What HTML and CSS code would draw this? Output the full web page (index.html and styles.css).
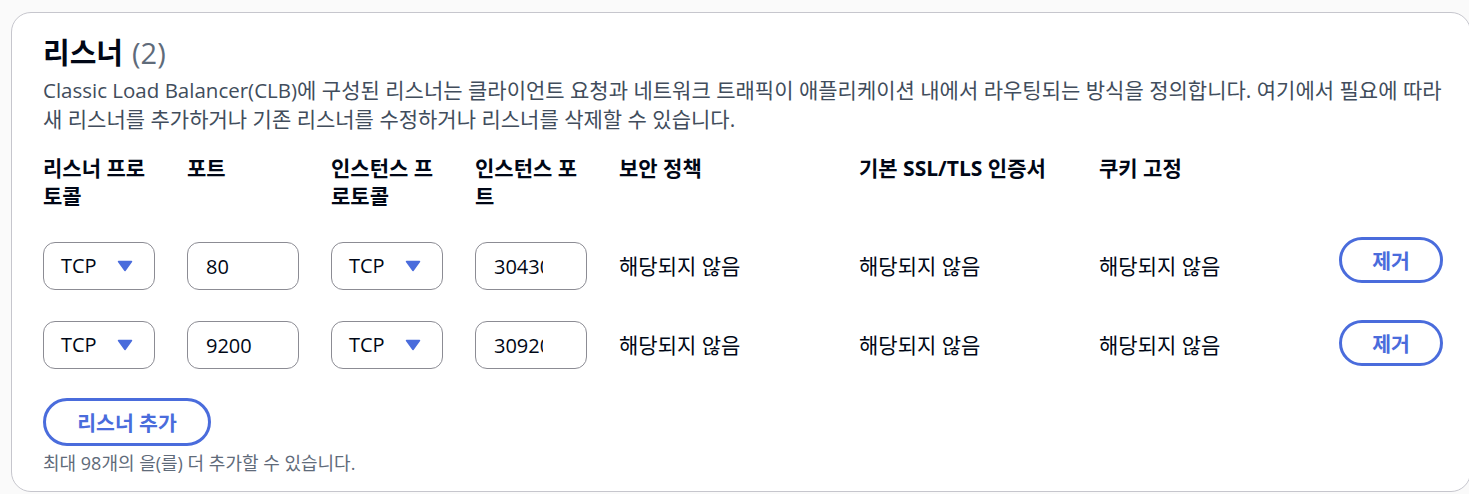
FILE: index.html
```html
<!DOCTYPE html>
<html lang="ko">
<head>
<meta charset="utf-8">
<title>리스너</title>
<link rel="stylesheet" href="styles.css">
</head>
<body>
<div class="page">
  <section class="card">
    <h2 class="title"><span class="title-main">리스너</span><span class="count">(2)</span></h2>
    <p class="desc"><span class="latin">Classic Load Balancer(CLB)</span>에 구성된 리스너는 클라이언트 요청과 네트워크 트래픽이 애플리케이션 내에서 라우팅되는 방식을 정의합니다. 여기에서 필요에 따라 새 리스너를 추가하거나 기존 리스너를 수정하거나 리스너를 삭제할 수 있습니다.</p>

    <div class="grid head">
      <div class="label">리스너 프로토콜</div>
      <div class="label">포트</div>
      <div class="label">인스턴스 프로토콜</div>
      <div class="label">인스턴스 포트</div>
      <div class="label">보안 정책</div>
      <div class="label">기본 SSL/TLS 인증서</div>
      <div class="label">쿠키 고정</div>
      <div></div>
    </div>

    <div class="grid row row-first">
      <div class="select"><span class="sel-text">TCP</span><svg class="caret" width="16" height="12" viewBox="0 0 16 12"><path d="M1.5 1.5 H14.5 L8 10.5 Z" fill="#4a6cdc" stroke="#4a6cdc" stroke-width="1.5" stroke-linejoin="round"/></svg></div>
      <input class="field" type="text" value="80" readonly>
      <div class="select"><span class="sel-text">TCP</span><svg class="caret" width="16" height="12" viewBox="0 0 16 12"><path d="M1.5 1.5 H14.5 L8 10.5 Z" fill="#4a6cdc" stroke="#4a6cdc" stroke-width="1.5" stroke-linejoin="round"/></svg></div>
      <input class="field" type="text" value="30430" readonly>
      <div class="cell">해당되지 않음</div>
      <div class="cell">해당되지 않음</div>
      <div class="cell">해당되지 않음</div>
      <button class="btn btn-remove" type="button">제거</button>
    </div>

    <div class="grid row row-second">
      <div class="select"><span class="sel-text">TCP</span><svg class="caret" width="16" height="12" viewBox="0 0 16 12"><path d="M1.5 1.5 H14.5 L8 10.5 Z" fill="#4a6cdc" stroke="#4a6cdc" stroke-width="1.5" stroke-linejoin="round"/></svg></div>
      <input class="field" type="text" value="9200" readonly>
      <div class="select"><span class="sel-text">TCP</span><svg class="caret" width="16" height="12" viewBox="0 0 16 12"><path d="M1.5 1.5 H14.5 L8 10.5 Z" fill="#4a6cdc" stroke="#4a6cdc" stroke-width="1.5" stroke-linejoin="round"/></svg></div>
      <input class="field" type="text" value="30920" readonly>
      <div class="cell">해당되지 않음</div>
      <div class="cell">해당되지 않음</div>
      <div class="cell">해당되지 않음</div>
      <button class="btn btn-remove" type="button">제거</button>
    </div>

    <button class="btn btn-add" type="button">리스너 추가</button>
    <p class="hint">최대 98개의 을(를) 더 추가할 수 있습니다.</p>
  </section>
</div>
</body>
</html>
```

FILE: styles.css
```css
html, body {
  margin: 0;
  padding: 0;
  background: #fafafa;
  overflow: hidden;
}

body {
  font-family: "Open Sans", "Noto Sans CJK KR", sans-serif;
  color: #000716;
}

.page {
  padding: 12px 0 0 11px;
}

.card {
  box-sizing: border-box;
  width: 1460px;
  background: #ffffff;
  border: 1px solid #c6c6cd;
  border-radius: 20px;
  padding: 21px 24px 16px 31px;
}

.title {
  margin: 0;
  font-weight: 700;
  line-height: 38px;
  height: 38px;
  display: flex;
  align-items: baseline;
}

.title-main {
  font-size: 29px;
  color: #000716;
}

.count {
  font-size: 29px;
  font-weight: 400;
  color: #5f6b7a;
  margin-left: 9px;
}

.desc {
  margin: 4px 0 0;
  font-size: 21px;
  line-height: 29px;
  color: #414d5c;
}

.latin {
  font-size: 20.5px;
}

.grid {
  display: grid;
  grid-template-columns: 112px 112px 112px 112px 208px 208px 208px auto;
  column-gap: 32px;
}

.head {
  margin-top: 20px;
  align-items: start;
}

.label {
  font-size: 21px;
  font-weight: 700;
  line-height: 28px;
  color: #000716;
}

.row {
  align-items: center;
  height: 48px;
}

.row-first {
  margin-top: 32px;
}

.row-second {
  margin-top: 31px;
}

.select,
.field {
  box-sizing: border-box;
  width: 112px;
  height: 48px;
  border: 1px solid #8c8c94;
  border-radius: 12px;
  background: #ffffff;
  font-family: "Open Sans", "Noto Sans CJK KR", sans-serif;
  font-size: 20px;
  color: #000716;
}

.select {
  display: flex;
  align-items: center;
  justify-content: space-between;
  padding: 0 21px 0 17px;
}

.sel-text {
  line-height: 28px;
}

.caret {
  display: block;
}

.field {
  padding: 0 43px 0 18px;
  outline: none;
  margin: 0;
}

.cell {
  font-size: 21px;
  line-height: 28px;
  color: #000716;
}

.btn {
  box-sizing: border-box;
  background: #ffffff;
  border: 3px solid #4a6cdc;
  border-radius: 999px;
  color: #4a6cdc;
  font-family: "Open Sans", "Noto Sans CJK KR", sans-serif;
  font-weight: 700;
  font-size: 20.5px;
  padding: 0 20px;
  cursor: pointer;
}

.btn-remove {
  width: 104px;
  height: 46px;
  justify-self: start;
}

.row-first .btn-remove {
  align-self: start;
  margin-top: -5px;
}

.row-second .btn-remove {
  align-self: start;
  margin-top: -1px;
}

.btn-add {
  display: block;
  margin-top: 29px;
  width: 168px;
  height: 48px;
}

.hint {
  margin: 5px 0 0;
  font-size: 18px;
  line-height: 24px;
  color: #5f6b7a;
}
```
